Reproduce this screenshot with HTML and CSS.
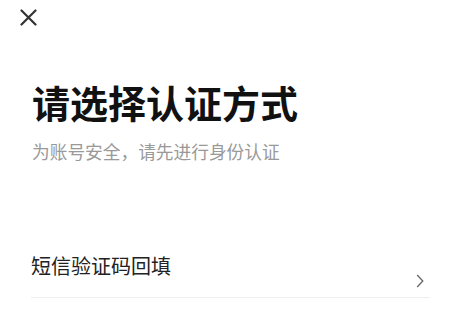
FILE: index.html
```html
<!DOCTYPE html>
<html lang="zh-CN">
<head>
    <meta charset="UTF-8">
    <meta name="viewport" content="width=device-width, initial-scale=1.0">
    <title>请选择认证方式</title>
    <link rel="stylesheet" href="styles.css">
</head>
<body>
    <div class="topbar">
        <button class="close-btn" aria-label="关闭">
            <svg width="17" height="17" viewBox="0 0 17 17">
                <path d="M1.5 1.5 L15.5 15.5 M15.5 1.5 L1.5 15.5" stroke="#333" stroke-width="2.2" stroke-linecap="round" fill="none"/>
            </svg>
        </button>
    </div>

    <div class="intro">
        <h1 class="title">请选择认证方式</h1>
        <p class="subtitle">为账号安全，请先进行身份认证</p>
    </div>

    <div class="options">
        <a href="#" class="option-row">
            <span class="option-label">短信验证码回填</span>
            <svg class="chevron" width="8" height="14" viewBox="0 0 8 14">
                <polyline points="1.2,1 6.8,7 1.2,13" stroke="#666" stroke-width="1.3" fill="none"/>
            </svg>
        </a>
    </div>
</body>
</html>
```

FILE: styles.css
```css
* { box-sizing: border-box; margin: 0; padding: 0; }
body {
    font-family: "Noto Sans CJK SC", "Noto Sans", sans-serif;
    background-color: #ffffff;
    color: #222;
    width: 454px;
    height: 318px;
    overflow: hidden;
}
.topbar {
    padding: 9px 0 0 20px;
    display: flex;
}
.close-btn {
    background: none;
    border: none;
    display: block;
    width: 17px;
    height: 17px;
    cursor: pointer;
}
.close-btn svg {
    display: block;
}
.intro {
    padding-left: 32px;
}
.title {
    margin-top: 57px;
    font-size: 38px;
    line-height: 38px;
    font-weight: 700;
    color: #111;
}
.subtitle {
    margin-top: 21px;
    font-size: 17.7px;
    line-height: 18px;
    color: #999;
}
.options {
    margin: 96px 24px 0 31px;
}
.option-row {
    display: flex;
    justify-content: space-between;
    align-items: flex-start;
    padding-bottom: 9px;
    border-bottom: 1px solid #eee;
    text-decoration: none;
}
.option-label {
    font-size: 20px;
    line-height: 20px;
    color: #222;
}
.chevron {
    display: block;
    margin-top: 18px;
    margin-right: 6px;
}
```
